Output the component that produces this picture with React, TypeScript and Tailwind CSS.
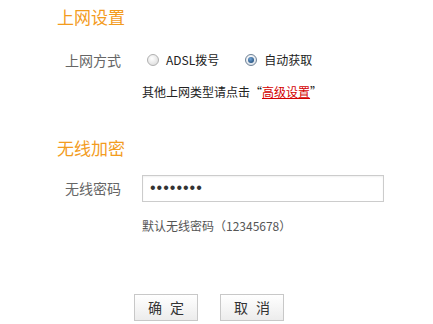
import { useState } from 'react';

const font = "font-['SimSun','Noto_Sans_CJK_SC',sans-serif]";

function Radio({ checked, label, onClick }: { checked: boolean; label: string; onClick: () => void }) {
  return (
    <label onClick={onClick} className="flex items-center cursor-pointer">
      <span
        className={
          checked
            ? 'w-[12px] h-[12px] rounded-full border border-[#6f8296] bg-[radial-gradient(circle_at_40%_35%,#ffffff,#cfd8e2)] flex items-center justify-center'
            : 'w-[12px] h-[12px] rounded-full border border-[#b0b0b0] bg-[radial-gradient(circle_at_40%_35%,#ffffff,#d6d6d6)]'
        }
      >
        {checked && (
          <span className="w-[6px] h-[6px] rounded-full bg-[radial-gradient(circle_at_40%_35%,#6fa3d6,#143c66)]" />
        )}
      </span>
      <span className="ml-[7px] text-[12px] text-[#222]">{label}</span>
    </label>
  );
}

function Btn({ a, b }: { a: string; b: string }) {
  return (
    <button className="w-[64px] h-[27px] border border-[#c8c8c8] bg-[linear-gradient(#ffffff,#ececec)] text-[14px] text-[#333] flex items-center justify-center gap-[8px]">
      <span>{a}</span>
      <span>{b}</span>
    </button>
  );
}

export default function App() {
  const [mode, setMode] = useState<'adsl' | 'auto'>('auto');

  return (
    <div className={`w-[433px] h-[324px] bg-white pl-[57px] overflow-hidden ${font}`}>
      <h2 className="h-[34px] leading-[34px] text-[17px] text-[#f39c1e] font-normal">上网设置</h2>

      <div className="mt-[14px] h-[24px] flex items-center">
        <span className="w-[64px] text-right text-[14px] text-[#666]">上网方式</span>
        <div className="ml-[26px] flex items-center">
          <Radio checked={mode === 'adsl'} label="ADSL拨号" onClick={() => setMode('adsl')} />
          <div className="ml-[26px]">
            <Radio checked={mode === 'auto'} label="自动获取" onClick={() => setMode('auto')} />
          </div>
        </div>
      </div>

      <div className="mt-[8px] h-[24px] flex items-center pl-[85px] text-[12px] text-[#222]">
        其他上网类型请点击“<a href="#" className="text-[#d40000] underline">高级设置</a>”
      </div>

      <h2 className="mt-[27px] h-[34px] leading-[34px] text-[17px] text-[#f39c1e] font-normal">无线加密</h2>

      <div className="mt-[9px] h-[28px] flex items-center">
        <span className="w-[64px] text-right text-[14px] text-[#666]">无线密码</span>
        <input
          type="password"
          defaultValue="12345678"
          className="ml-[21px] w-[242px] h-[27px] border border-[#cccccc] pl-[7px] font-['Liberation_Sans',sans-serif] text-[16px] text-[#333] tracking-[1px] outline-none shadow-[inset_0_1px_2px_rgba(0,0,0,0.06)]"
        />
      </div>

      <div className="mt-[14px] h-[20px] flex items-center pl-[85px] text-[12px] text-[#555]">
        默认无线密码（12345678）
      </div>

      <div className="mt-[58px] flex gap-[22px] pl-[77px]">
        <Btn a="确" b="定" />
        <Btn a="取" b="消" />
      </div>
    </div>
  );
}
